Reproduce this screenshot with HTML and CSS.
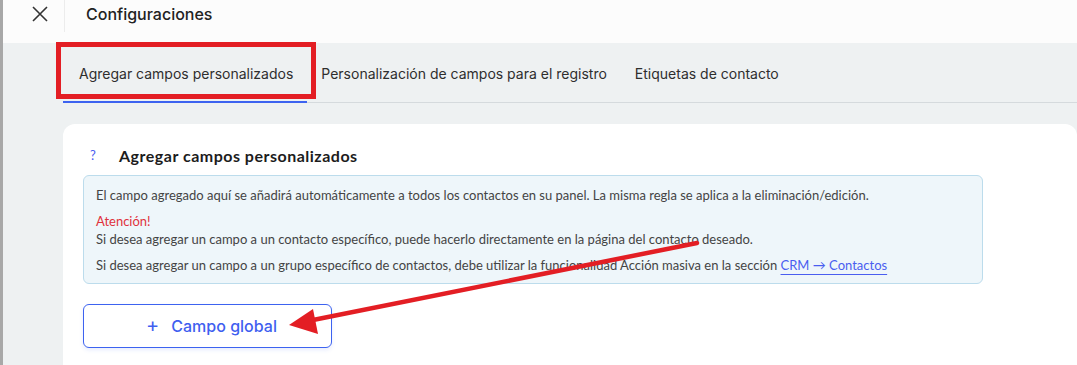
FILE: index.html
```html
<!DOCTYPE html>
<html lang="es">
<head>
    <meta charset="UTF-8">
    <meta name="viewport" content="width=device-width, initial-scale=1.0">
    <title>Configuraciones</title>
    <link rel="stylesheet" href="styles.css">
</head>
<body>
    <div class="shell">
        <div class="edge"></div>
        <div class="main">
            <header class="topbar">
                <button class="close" aria-label="Cerrar">
                    <svg width="16" height="16" viewBox="0 0 16 16">
                        <path d="M1 1 L15 15 M15 1 L1 15" stroke="#333" stroke-width="1.6" fill="none"/>
                    </svg>
                </button>
                <h1 class="title">Configuraciones</h1>
            </header>

            <div class="content">
                <nav class="tabs">
                    <a class="tab active">Agregar campos personalizados</a>
                    <a class="tab">Personalización de campos para el registro</a>
                    <a class="tab">Etiquetas de contacto</a>
                </nav>

                <section class="card">
                    <div class="card-head">
                        <span class="help">?</span>
                        <h2>Agregar campos personalizados</h2>
                    </div>

                    <div class="info">
                        <p>El campo agregado aquí se añadirá automáticamente a todos los contactos en su panel. La misma regla se aplica a la eliminación/edición.</p>
                        <p><span class="warn">Atención!</span><br>Si desea agregar un campo a un contacto específico, puede hacerlo directamente en la página del contacto deseado.</p>
                        <p>Si desea agregar un campo a un grupo específico de contactos, debe utilizar la funcionalidad Acción masiva en la sección <a class="link">CRM → Contactos</a></p>
                    </div>

                    <button class="add-btn"><span class="plus">+</span> Campo global</button>
                </section>
            </div>
        </div>
    </div>

    <!-- annotation overlay -->
    <div class="mark"></div>
    <svg class="arrow" width="1077" height="365" viewBox="0 0 1077 365">
        <line x1="697" y1="243" x2="308" y2="321" stroke="#e31e24" stroke-width="4.5" stroke-linecap="round"/>
        <polygon points="289,325 313,309 318,334" fill="#e31e24"/>
    </svg>
</body>
</html>
```

FILE: styles.css
```css
* {
    margin: 0;
    padding: 0;
    box-sizing: border-box;
}

body {
    font-family: 'Inter', 'Roboto', sans-serif;
    background: #eef1f2;
    width: 1077px;
    height: 365px;
    overflow: hidden;
    position: relative;
}

.shell {
    display: flex;
    height: 100%;
}

.edge {
    width: 3px;
    flex-shrink: 0;
    background: #a8a8a8;
}

.main {
    flex: 1;
    display: flex;
    flex-direction: column;
    overflow: hidden;
}

.topbar {
    height: 43px;
    flex-shrink: 0;
    background: #fcfcfc;
    display: flex;
    align-items: flex-start;
}

.close {
    width: 62px;
    height: 32px;
    border: none;
    border-right: 1px solid #ececec;
    background: transparent;
    display: flex;
    align-items: center;
    justify-content: center;
    padding-left: 12px;
}

.close svg {
    margin-top: -4px;
}

.title {
    font-size: 16px;
    font-weight: 500;
    color: #222;
    margin-left: 21px;
    line-height: 28px;
}

.content {
    flex: 1;
    padding-left: 60px;
}

.tabs {
    display: flex;
    height: 60px;
    border-bottom: 1px solid #d5dadd;
}

.tab {
    display: flex;
    align-items: center;
    padding: 2px 14px 0;
    font-size: 14px;
    color: #2e2e2e;
    white-space: nowrap;
}

.tab:first-child {
    padding-left: 16px;
}

.tab.active {
    border-bottom: 2px solid #3d63f0;
    margin-bottom: -1px;
}

.card {
    margin-top: 21px;
    background: #fff;
    border-radius: 12px 12px 0 0;
    padding: 20px 93px 20px 20px;
    height: 260px;
}

.card-head {
    display: flex;
    align-items: center;
    height: 22px;
    margin-bottom: 9px;
}

.help {
    font-family: 'Lato', sans-serif;
    font-size: 13px;
    color: #4a5cf0;
    width: 36px;
    padding-left: 7px;
}

.card-head h2 {
    font-family: 'Lato', sans-serif;
    font-size: 16px;
    font-weight: 700;
    color: #1c1c1c;
    letter-spacing: 0.5px;
}

.info {
    background: #eef6fa;
    border: 1px solid #bcdcec;
    border-radius: 6px;
    padding: 10px 12px 9px;
    width: 900px;
    font-family: 'Lato', sans-serif;
    font-size: 13px;
    line-height: 18px;
    color: #444;
}

.info p + p {
    margin-top: 8px;
}

.warn {
    color: #e0323c;
}

.link {
    color: #4a5ef0;
    text-decoration: underline;
    text-underline-offset: 4px;
    text-decoration-color: #4a5ef0;
}

.add-btn {
    margin-top: 20px;
    width: 249px;
    height: 44px;
    background: #fff;
    border: 1px solid #3d63f0;
    border-radius: 6px;
    box-shadow: 0 2px 4px rgba(61, 99, 240, 0.12);
    font-family: 'Inter', sans-serif;
    font-size: 16px;
    font-weight: 500;
    color: #3f5ff0;
    display: flex;
    align-items: center;
    justify-content: center;
    gap: 12px;
    padding-left: 8px;
}

.plus {
    font-size: 20px;
    font-weight: 400;
    line-height: 1;
    margin-top: -2px;
}

/* annotation overlays */
.mark {
    position: absolute;
    left: 56px;
    top: 42px;
    width: 260px;
    height: 57px;
    border: 5px solid #e31e24;
}

.arrow {
    position: absolute;
    left: 0;
    top: 0;
    pointer-events: none;
}
```
